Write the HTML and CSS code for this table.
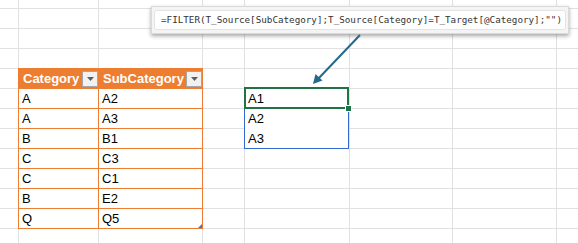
FILE: index.html
```html
<!DOCTYPE html>
<html>
<head>
<meta charset="utf-8">
<link rel="stylesheet" href="styles.css">
</head>
<body>
<div class="sheet">
  <div class="xtable">
    <div class="th"><span>Category</span><span class="dd"><svg width="7" height="4" viewBox="0 0 7 4"><path d="M0 0h7L3.5 4z" fill="#5f5f5f"/></svg></span></div>
    <div class="th"><span>SubCategory</span><span class="dd"><svg width="7" height="4" viewBox="0 0 7 4"><path d="M0 0h7L3.5 4z" fill="#5f5f5f"/></svg></span></div>
    <div class="td">A</div><div class="td">A2</div>
    <div class="td">A</div><div class="td">A3</div>
    <div class="td">B</div><div class="td">B1</div>
    <div class="td">C</div><div class="td">C3</div>
    <div class="td">C</div><div class="td">C1</div>
    <div class="td">B</div><div class="td">E2</div>
    <div class="td">Q</div><div class="td">Q5</div>
    <span class="resize"></span>
  </div>
  <div class="spill">
    <div class="sc">A1</div>
    <div class="sc">A2</div>
    <div class="sc">A3</div>
    <span class="active"></span>
    <span class="handle"></span>
  </div>
  <div class="tip"><div class="tip-inner">=FILTER(T_Source[SubCategory];T_Source[Category]=T_Target[@Category];"")</div></div>
  <svg class="arrow" width="578" height="243" viewBox="0 0 578 243">
    <line x1="360" y1="35" x2="318" y2="79" stroke="#22698b" stroke-width="2"/>
    <path d="M313 84 L315.5 74 L322.5 80.5 Z" fill="#22698b"/>
  </svg>
</div>
</body>
</html>
```
FILE: styles.css
```css
html, body { margin: 0; padding: 0; background: #fff; }
.sheet {
  position: relative;
  width: 578px;
  height: 243px;
  overflow: hidden;
  display: grid;
  grid-template-columns: 18px 80px 104px 42px 105px 103px 104px 1fr;
  grid-template-rows: 8px repeat(11, 20px) 1fr;
  font-family: "Liberation Sans", Arial, sans-serif;
  background-color: #fff;
  background-image:
    linear-gradient(#e1e1e1, #e1e1e1),
    linear-gradient(#e1e1e1, #e1e1e1),
    linear-gradient(#e1e1e1, #e1e1e1),
    linear-gradient(#e1e1e1, #e1e1e1),
    linear-gradient(#e1e1e1, #e1e1e1),
    linear-gradient(#e1e1e1, #e1e1e1),
    linear-gradient(#e1e1e1, #e1e1e1),
    linear-gradient(to bottom, #e1e1e1 0 1px, transparent 1px 20px);
  background-size: 1px 100%, 1px 100%, 1px 100%, 1px 100%, 1px 100%, 1px 100%, 1px 100%, 100% 20px;
  background-position: 18px 0, 98px 0, 202px 0, 244px 0, 349px 0, 452px 0, 556px 0, 0 8px;
  background-repeat: no-repeat, no-repeat, no-repeat, no-repeat, no-repeat, no-repeat, no-repeat, repeat-y;
}
.xtable {
  grid-column: 2 / 4;
  grid-row: 5 / 13;
  position: relative;
  align-self: start;
  width: 185px;
  height: 161px;
  box-sizing: border-box;
  display: grid;
  grid-template-columns: 80px 104px;
  grid-auto-rows: 20px;
  border-right: 1px solid #ed7d31;
  border-bottom: 1px solid #ed7d31;
  background: #fff;
}
.th, .td {
  box-sizing: border-box;
  border-top: 1px solid #ed7d31;
  border-left: 1px solid #ed7d31;
  font-size: 13px;
  line-height: 19px;
  padding-left: 3px;
  color: #000;
  white-space: nowrap;
}
.th {
  background: #ed7d31;
  color: #fff;
  font-weight: bold;
  display: flex;
  justify-content: space-between;
  align-items: center;
  padding-left: 4px;
}
.dd {
  flex: none;
  width: 16px;
  height: 16px;
  box-sizing: border-box;
  background: #f2f2f2;
  border: 1px solid #a6a6a6;
  display: flex;
  align-items: center;
  justify-content: center;
  margin-top: 1px;
}
.resize {
  position: absolute;
  right: 0;
  bottom: 0;
  width: 4px;
  height: 4px;
  background: #4472c4;
  clip-path: polygon(100% 0, 100% 100%, 0 100%);
}
.spill {
  grid-column: 5;
  grid-row: 6 / 9;
  position: relative;
  align-self: start;
  width: 105px;
  height: 61px;
  box-sizing: border-box;
  border: 1px solid #2f6bd0;
  background: #fff;
  display: grid;
  grid-auto-rows: 20px;
}
.sc {
  font-size: 13px;
  line-height: 19px;
  padding-left: 3px;
  color: #000;
}
.active {
  position: absolute;
  left: -1px;
  top: -2px;
  width: 105px;
  height: 22px;
  box-sizing: border-box;
  border: 2px solid #217346;
}
.handle {
  position: absolute;
  left: 100px;
  top: 16px;
  width: 5px;
  height: 5px;
  background: #217346;
  border: 1px solid #fff;
}
.tip {
  position: absolute;
  left: 151px;
  top: 6px;
  width: 418px;
  height: 28px;
  box-sizing: border-box;
  background: #f4f4f4;
  border: 1px solid #dadada;
  box-shadow: 0 2px 4px rgba(0, 0, 0, 0.35);
  padding: 3px 2px;
}
.tip-inner {
  height: 20px;
  box-sizing: border-box;
  background: #fff;
  border: 1px solid #e4e4e4;
  border-radius: 3px;
  padding-left: 6px;
  font-family: "DejaVu Sans Mono", "Liberation Mono", monospace;
  font-size: 9.25px;
  line-height: 18px;
  color: #333;
  white-space: nowrap;
}
.arrow {
  position: absolute;
  left: 0;
  top: 0;
  pointer-events: none;
}
```
